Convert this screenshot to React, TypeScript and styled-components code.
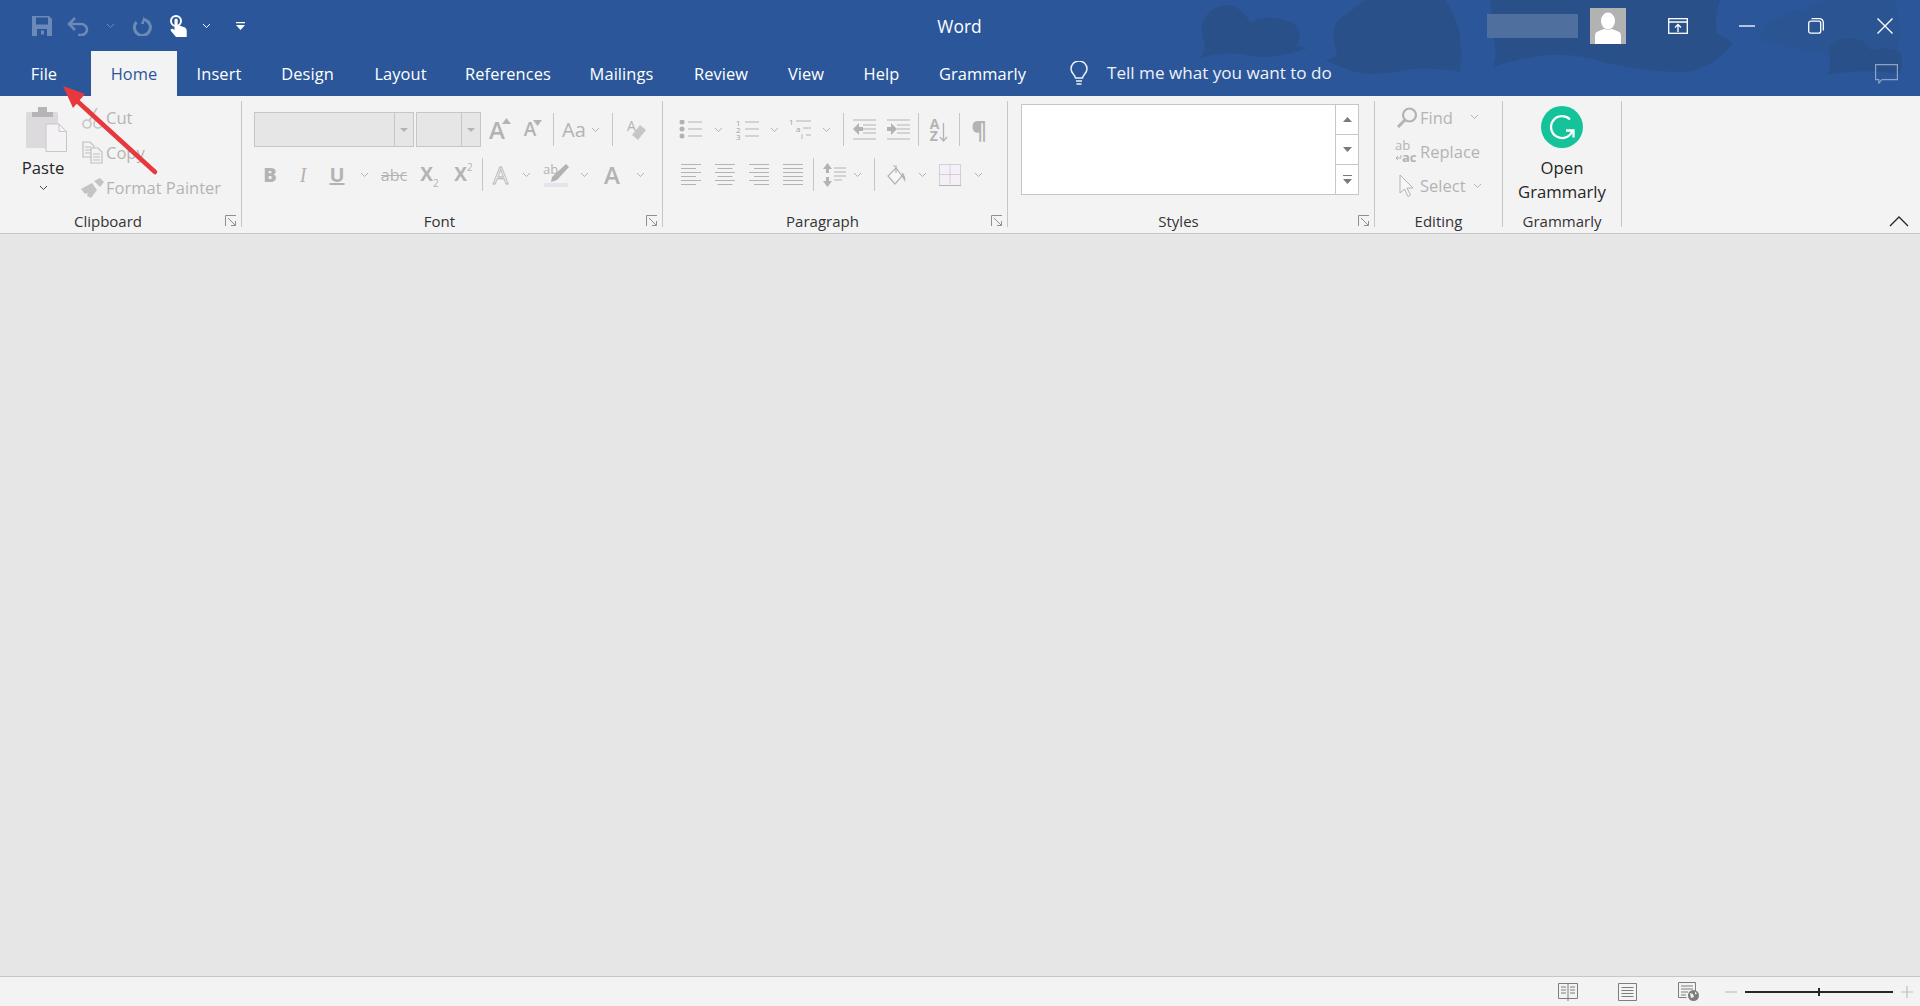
import React from 'react';
import styled, { createGlobalStyle } from 'styled-components';

const BLUE = '#2b579a';
const OFF = '#b3b3b3';
const LINE = '#c6c6c6';
const FONT = '"Open Sans", "Noto Sans", "Liberation Sans", sans-serif';

const GlobalStyle = createGlobalStyle`
  html, body { margin: 0; height: 100%; }
  body { font-family: ${FONT}; background: #e6e6e6; overflow: hidden; }
  #root { height: 100%; }
`;

const Shell = styled.div`
  position: relative;
  display: flex;
  flex-direction: column;
  height: 1006px;
  overflow: hidden;
`;

const Header = styled.header`
  position: relative;
  height: 96px;
  flex: none;
  background: ${BLUE};
  color: #fff;
`;

const HeaderArt = styled.svg`
  position: absolute;
  inset: 0;
  width: 100%;
  height: 96px;
`;

const TitleBar = styled.div`
  position: relative;
  display: grid;
  grid-template-columns: 1fr auto 1fr;
  align-items: center;
  height: 51px;
`;

const QuickAccess = styled.div`
  display: flex;
  align-items: center;
  padding-left: 26px;
`;

const Slot = styled.span<{ $w: number; $faded?: boolean }>`
  display: inline-flex;
  align-items: center;
  justify-content: center;
  flex: none;
  width: ${p => p.$w}px;
  opacity: ${p => (p.$faded ? 0.3 : 1)};
`;

const Title = styled.div`
  font-size: 17.4px;
  text-align: center;
  padding-right: 1px;
`;

const WindowArea = styled.div`
  display: flex;
  align-items: center;
  justify-content: flex-end;
  padding-right: 1px;
`;

const NamePlate = styled.div`
  width: 91px;
  height: 24px;
  margin-right: 12px;
  background: #4f6f9e;
`;

const Avatar = styled.div`
  width: 36px;
  height: 36px;
  margin-right: 17px;
  background: #b2b2b2;
`;

const WindowButton = styled.span`
  display: inline-flex;
  justify-content: center;
  align-items: center;
  width: 69px;
  height: 36px;
`;

const TabBar = styled.nav`
  position: relative;
  display: flex;
  align-items: stretch;
  height: 45px;
  padding-left: 12px;
`;

const Tab = styled.div<{ $w: number; $active?: boolean; $gapAfter?: number }>`
  display: flex;
  align-items: center;
  justify-content: center;
  flex: none;
  width: ${p => p.$w}px;
  margin-right: ${p => p.$gapAfter ?? 0}px;
  font-size: 16.4px;
  letter-spacing: 0.1px;
  background: ${p => (p.$active ? '#f3f3f3' : 'transparent')};
  color: ${p => (p.$active ? BLUE : '#fff')};
`;

const TellMe = styled.div`
  display: flex;
  align-items: center;
  gap: 19px;
  margin-left: 24px;
  padding-bottom: 2px;
  font-size: 17.1px;
  color: #eef1f7;
`;

const CommentSlot = styled.div`
  position: absolute;
  right: 22px;
  top: 13px;
`;

const Ribbon = styled.section`
  display: flex;
  flex: none;
  height: 138px;
  padding: 5px 0 6px;
  box-sizing: border-box;
  background: #f3f3f3;
  border-bottom: 1px solid ${LINE};
  position: relative;
`;

const Group = styled.div<{ $w: number; $top?: number; $left?: number }>`
  position: relative;
  display: flex;
  flex-direction: column;
  flex: none;
  box-sizing: border-box;
  width: ${p => p.$w}px;
  padding-top: ${p => p.$top ?? 0}px;
  padding-left: ${p => p.$left ?? 0}px;
  border-right: 1px solid ${LINE};
`;

const GroupBody = styled.div`
  flex: 1;
  min-height: 0;
`;

const SplitBody = styled(GroupBody)`
  display: flex;
`;

const GroupLabel = styled.div<{ $pull?: number; $launcher?: boolean }>`
  height: 20px;
  margin: 0 0 -4px ${p => -(p.$pull ?? 0)}px;
  padding-right: ${p => (p.$launcher ? 25 : 0)}px;
  font-size: 15px;
  line-height: 20px;
  text-align: center;
  color: #333;
`;

const Launcher = styled.span`
  position: absolute;
  right: 4px;
  bottom: 0;
  display: flex;
`;

const ToolRow = styled.div<{ $mb?: number }>`
  display: flex;
  align-items: center;
  height: 35px;
  margin-bottom: ${p => p.$mb ?? 0}px;
`;

const Sep = styled.span<{ $l?: number; $r?: number }>`
  flex: none;
  width: 1px;
  height: 33px;
  margin: 0 ${p => p.$r ?? 0}px 0 ${p => p.$l ?? 0}px;
  background: ${LINE};
`;

const ComboBox = styled.div<{ $w: number; $mr?: number }>`
  display: flex;
  flex: none;
  box-sizing: border-box;
  width: ${p => p.$w}px;
  height: 35px;
  margin-right: ${p => p.$mr ?? 0}px;
  background: #e6e6e6;
  border: 1px solid ${LINE};
`;

const ComboField = styled.div`
  flex: 1;
`;

const ComboDrop = styled.div`
  display: flex;
  align-items: center;
  justify-content: center;
  width: 18px;
  border-left: 1px solid ${LINE};
`;

const DownTriangle = styled.span`
  width: 0;
  height: 0;
  border-left: 4px solid transparent;
  border-right: 4px solid transparent;
  border-top: 4px solid ${OFF};
`;

const Glyph = styled.span<{ $size?: number; $weight?: number; $italic?: boolean; $under?: boolean; $strike?: boolean; $font?: string }>`
  position: relative;
  display: inline-block;
  font-family: ${p => p.$font ?? FONT};
  font-size: ${p => p.$size ?? 18}px;
  font-weight: ${p => p.$weight ?? 400};
  font-style: ${p => (p.$italic ? 'italic' : 'normal')};
  text-decoration: ${p => (p.$under ? 'underline' : p.$strike ? 'line-through' : 'none')};
  line-height: 1;
  color: ${OFF};
`;

const OutlineGlyph = styled(Glyph)`
  color: #fafafa;
  -webkit-text-stroke: 0.8px ${OFF};
`;

const SubMark = styled.sub`
  font-size: 10px;
  font-weight: 400;
  vertical-align: -6px;
  line-height: 0;
`;

const SupMark = styled.sup`
  font-size: 10px;
  font-weight: 400;
  vertical-align: 10px;
  line-height: 0;
`;

const StackedLetters = styled.span`
  display: inline-flex;
  flex-direction: column;
  font-size: 14px;
  font-weight: 700;
  line-height: 12px;
  color: ${OFF};
`;

const SizeTick = styled.svg<{ $size: number }>`
  position: absolute;
  top: 0;
  right: -6px;
  width: ${p => p.$size}px;
  height: 6px;
`;

const PasteColumn = styled.div`
  display: flex;
  flex-direction: column;
  align-items: center;
  box-sizing: border-box;
  width: 79px;
  padding: 6px 0 0 7px;
  font-size: 16.7px;
  color: #262626;
`;

const PasteArt = styled.span`
  display: flex;
  margin-left: 7px;
`;

const PasteText = styled.span`
  margin-top: 4px;
  line-height: 24px;
`;

const PasteChevron = styled.span`
  display: flex;
  margin-top: 5px;
`;

const CommandList = styled.div<{ $offset?: number }>`
  display: flex;
  flex-direction: column;
  margin-top: ${p => p.$offset ?? 0}px;
`;

const Command = styled.div<{ $h?: number }>`
  display: flex;
  align-items: center;
  height: ${p => p.$h ?? 35}px;
  font-size: 16.5px;
  color: ${OFF};
`;

const CommandIcon = styled.span`
  display: inline-flex;
  justify-content: center;
  width: 27px;
  flex: none;
`;

const CommandChevron = styled.span<{ $l: number }>`
  display: inline-flex;
  margin-left: ${p => p.$l}px;
`;

const Gallery = styled.div`
  display: flex;
  box-sizing: border-box;
  width: 338px;
  height: 91px;
  margin-left: 13px;
  background: #fff;
  border: 1px solid ${LINE};
`;

const GalleryField = styled.div`
  flex: 1;
`;

const GalleryScroll = styled.div`
  display: flex;
  flex-direction: column;
  width: 22px;
  border-left: 1px solid ${LINE};
`;

const GalleryStep = styled.div`
  flex: 1;
  display: flex;
  align-items: center;
  justify-content: center;
  & + & { border-top: 1px solid ${LINE}; }
`;

const GrammarlyBody = styled(GroupBody)`
  display: flex;
  flex-direction: column;
  align-items: center;
`;

const OpenLabel = styled.div`
  margin-top: 8px;
  font-size: 16.7px;
  line-height: 24px;
  text-align: center;
  color: #262626;
`;

const Collapse = styled.span`
  position: absolute;
  right: 11px;
  bottom: 6px;
  display: flex;
`;

const DocumentArea = styled.main`
  flex: 1;
  background: #e6e6e6;
`;

const StatusBar = styled.footer`
  display: flex;
  align-items: center;
  justify-content: flex-end;
  box-sizing: border-box;
  height: 30px;
  flex: none;
  padding: 0 7px 0 0;
  background: #f3f3f3;
  border-top: 1px solid ${LINE};
`;

const ViewButton = styled.span`
  display: inline-flex;
  justify-content: center;
  width: 60px;
`;

const ZoomTrack = styled.div`
  position: relative;
  width: 148px;
  height: 2px;
  margin: 0 8px 0 1px;
  background: #262626;
`;

const ZoomThumb = styled.span`
  position: absolute;
  left: 73px;
  top: -3px;
  width: 2px;
  height: 8px;
  background: #262626;
`;

const ArrowOverlay = styled.svg`
  position: absolute;
  left: 0;
  top: 0;
  width: 200px;
  height: 200px;
  pointer-events: none;
`;

const Chevron = ({ color = OFF, w = 9 }: { color?: string; w?: number }) => (
  <svg width={w} height="6" viewBox="0 0 9 6" fill="none"><path d="M1 1l3.5 3.5L8 1" stroke={color} strokeWidth="1" /></svg>
);

const SaveIcon = () => (
  <svg width="20" height="20" viewBox="0 0 20 20"><path fill="#fff" fillRule="evenodd" d="M0 0h17l3 3v17H0zM4 1.500v7h12v-7zM5 13v7h10v-7zM9 14.500h3v4H9z" /></svg>
);
const UndoIcon = () => (
  <svg width="22" height="20" viewBox="0 0 22 20" fill="none" stroke="#fff" strokeWidth="2.600"><path d="M8 2L2 8l6 6" /><path d="M2 8h12c4 0 6 3 6 5.500S18 19 14 19h-3" /></svg>
);
const RedoIcon = () => (
  <svg width="20" height="20" viewBox="0 0 20 20" fill="none" stroke="#fff" strokeWidth="3"><path d="M11.500 3.500a8 8 0 1 1-7 2.500" /><path d="M12 0v8H9z" fill="#fff" stroke="none" /></svg>
);
const TouchIcon = () => (
  <svg width="17" height="22" viewBox="0 0 17 22"><circle cx="6" cy="6" r="5" fill="none" stroke="#fff" strokeWidth="2" /><path fill="#fff" d="M4.500 5a1.600 1.600 0 0 1 3.200 0v5l6 2c2 .6 3 2 3 4v6H6l-5-6c-1-1.300.5-3 2-2l1.500 1z" /></svg>
);
const CustomizeIcon = () => (
  <svg width="9" height="8" viewBox="0 0 9 8"><path fill="#fff" d="M0 0h9v1.300H0zM0 3h9L4.500 8z" /></svg>
);

const PresentIcon = () => (
  <svg width="20" height="16" viewBox="0 0 20 16" fill="none" stroke="#fff" strokeWidth="1.300"><rect x=".7" y=".7" width="18.600" height="14.600" /><path d="M.7 4h18.600M10 14V7M7 9.500L10 6.500l3 3" /></svg>
);
const MinimizeIcon = () => (
  <svg width="16" height="2" viewBox="0 0 16 2"><path d="M0 1h16" stroke="#fff" strokeWidth="1.300" /></svg>
);
const RestoreIcon = () => (
  <svg width="16" height="16" viewBox="0 0 16 16" fill="none" stroke="#fff" strokeWidth="1.300"><rect x=".7" y="3.200" width="12" height="12" rx="2" /><path d="M3.500 .7h8a3.800 3.800 0 0 1 3.800 3.800v8" /></svg>
);
const CloseIcon = () => (
  <svg width="16" height="16" viewBox="0 0 16 16"><path d="M.5.500l15 15M15.500.500l-15 15" stroke="#fff" strokeWidth="1.400" /></svg>
);
const AvatarIcon = () => (
  <svg width="36" height="36" viewBox="0 0 36 36"><ellipse cx="18" cy="13" rx="7" ry="8.500" fill="#fff" /><path fill="#fff" d="M5 36v-8c0-3 1-4 4-5l5-2 4 1 4-1 5 2c3 1 4 2 4 5v8z" /></svg>
);
const CommentIcon = () => (
  <svg width="23" height="20" viewBox="0 0 23 20" fill="none" stroke="#8ba3c6" strokeWidth="1.200"><path d="M.6.600h21.800v15H7L3.800 19v-3.400H.6z" /></svg>
);
const BulbIcon = () => (
  <svg width="18" height="24" viewBox="0 0 18 24" fill="none" stroke="#eef1f7" strokeWidth="1.500"><path d="M5.500 17c0-3-4.500-4.500-4.500-9a8 8 0 0 1 16 0c0 4.500-4.500 6-4.500 9z" /><path d="M6 20h6M6.500 23h5" /></svg>
);

const PasteIcon = () => (
  <svg width="41" height="45" viewBox="0 0 41 45">
    <rect y="5" width="32" height="36" rx="2" fill="#dcdadc" />
    <path fill="#b6b4b6" d="M6 5h6V0h9v5h6v5H6z" />
    <path fill="#f5f2f6" stroke="#c8c6c8" d="M20 17h13l7.500 7.500V44.500H20z" />
    <path fill="none" stroke="#c8c6c8" d="M33 17v7.500h7.500" />
  </svg>
);
const CutIcon = () => (
  <svg width="21" height="22" viewBox="0 0 21 22" fill="none" stroke="#c4c4c4" strokeWidth="1.600"><circle cx="5" cy="17" r="4" /><circle cx="16" cy="17" r="4" /><path d="M7 14L15 1M14 14L6 1" /></svg>
);
const CopyIcon = () => (
  <svg width="21" height="23" viewBox="0 0 21 23" fill="#f3f3f3" stroke="#c0c0c0" strokeWidth="1.200"><path d="M1 1h7l4 4v11H1zM3 6h6M3 9h6M3 12h6" /><path d="M9 7h7l4 4v11H9zM11 13h7M11 16h7M11 19h7" /></svg>
);
const PainterIcon = () => (
  <svg width="24" height="20" viewBox="0 0 24 20"><path fill="#c4c4c4" d="M0 11l11-6 5 7-6 8-4-2 1-3-3 1zM13 3l6-3 4 4-4 5z" /></svg>
);
const Launch = () => (
  <svg width="12" height="12" viewBox="0 0 12 12" fill="none" stroke="#8f8f8f" strokeWidth="1"><path d="M.5 11V.5H11M3 3l7.500 7.500M10.500 6v4.500H6" /></svg>
);

const ClearIcon = () => (
  <svg width="20" height="22" viewBox="0 0 20 22" overflow="visible"><text x="0" y="12" fontSize="14" fill={OFF} fontFamily={FONT}>A</text><path fill="#c6c6c6" d="M13 6l6 5-8 10-6-5z" /></svg>
);
const HighlightIcon = () => (
  <svg width="26" height="26" viewBox="0 0 26 26" overflow="visible"><text x="0" y="12" fontSize="13" fill={OFF} fontFamily={FONT}>ab</text><path fill={OFF} d="M23 2l3 3L14 18l-6 2 1-5z" /><path fill="#e8e2ea" d="M1 21h24v4H1z" /></svg>
);

const ListLines = ({ x = 8 }: { x?: number }) => (
  <path d={`M${x} 2h14M${x} 9h14M${x} 16h14`} stroke={OFF} strokeWidth="1" />
);
const BulletsIcon = () => (
  <svg width="24" height="19" viewBox="0 0 24 19" fill={OFF}><circle cx="3" cy="2" r="2.500" /><circle cx="3" cy="9" r="2.500" /><circle cx="3" cy="16" r="2.500" /><ListLines x={9} /></svg>
);
const NumberingIcon = () => (
  <svg width="24" height="20" viewBox="0 0 24 20" fill="#a0a0a0" fontSize="8" fontFamily={FONT} overflow="visible"><text x="0" y="6">1</text><text x="0" y="13">2</text><text x="0" y="20">3</text><ListLines x={9} /></svg>
);
const MultilevelIcon = () => (
  <svg width="24" height="21" viewBox="0 0 24 21" fill="#a0a0a0" fontSize="8" fontFamily={FONT} overflow="visible"><text x="0" y="6">1</text><text x="7" y="13">a</text><text x="12" y="20">i</text><path d="M7 2h15M14 9h8M17 16h5" stroke={OFF} strokeWidth="1" /></svg>
);
const IndentIcon = ({ increase }: { increase?: boolean }) => (
  <svg width="23" height="21" viewBox="0 0 23 21" fill="none" stroke={OFF} strokeWidth="1"><path d="M0 1h23M10 6h13M10 10h13M10 14h13M0 20h23" /><path fill={OFF} stroke="none" d={increase ? 'M0 8h4V4l6 6-6 6v-4H0z' : 'M10 8H6V4l-6 6 6 6v-4h4z'} /></svg>
);
const DownArrow = () => (
  <svg width="9" height="26" viewBox="0 0 9 26" fill="none" stroke={OFF} strokeWidth="1.300"><path d="M4.500 6v18M1 20l3.500 4L8 20" /></svg>
);
const AlignIcon = ({ mode }: { mode: 'left' | 'center' | 'right' | 'justify' }) => {
  const rows = [0, 1, 2, 3, 4, 5].map(i => {
    const short = i % 2 === 1 && mode !== 'justify';
    const w = short ? 15 : 20;
    const x = mode === 'center' ? (20 - w) / 2 : mode === 'right' ? 20 - w : 0;
    return <path key={i} d={`M${x} ${i * 4 + 0.5}h${w}`} />;
  });
  return <svg width="20" height="22" viewBox="0 0 20 22" fill="none" stroke={OFF} strokeWidth="1">{rows}</svg>;
};
const LineSpacingIcon = () => (
  <svg width="23" height="24" viewBox="0 0 23 24" fill="none" stroke={OFF} strokeWidth="1"><path fill={OFF} stroke="none" d="M4.500 0L9 6H6v4H3V6H0zM3 14h3v4h3l-4.500 6L0 18h3z" /><path d="M11 5h12M11 9h12M11 13h12M11 17h8" /></svg>
);
const ShadingIcon = () => (
  <svg width="19" height="20" viewBox="0 0 19 20" fill="none" stroke={OFF} strokeWidth="1.200"><path d="M9 3L1 11l7 8 7-8z" fill="#f7f7f7" /><path d="M6 1h3v7" /><path d="M15 7c3 3 4 7 3 10-1-2-2-4-3-5z" fill={OFF} stroke="none" /></svg>
);
const BordersIcon = () => (
  <svg width="22" height="22" viewBox="0 0 22 22" fill="none" stroke={OFF} strokeWidth="1"><path fill="#f5eff7" stroke="none" d="M0 0h22v22H0z" /><path strokeDasharray="1 1" d="M.5.500h21v21H.500zM11 .5v20M.5 10.500h21" /><path d="M0 21.500h22" /></svg>
);

const FindIcon = () => (
  <svg width="22" height="21" viewBox="0 0 22 21" fill="none" stroke={OFF} strokeWidth="2.200"><circle cx="13.500" cy="8" r="6.500" /><path strokeWidth="3" d="M9 13l-7 7" /></svg>
);
const ReplaceIcon = () => (
  <svg width="24" height="24" viewBox="0 0 24 24" fill={OFF} fontFamily={FONT} fontSize="13" overflow="visible"><text x="0" y="10">ab</text><text x="7" y="22" fontWeight="700">ac</text><path d="M6 15v3H1M3 16l-2 2 2 2" fill="none" stroke={OFF} strokeWidth="1" /></svg>
);
const SelectIcon = () => (
  <svg width="15" height="23" viewBox="0 0 15 23" fill="#f7f7f7" stroke={OFF} strokeWidth="1"><path d="M1 1l13 13H8l3.500 7-2.500 1.500L5.500 15 1 19z" /></svg>
);
const GrammarlyIcon = () => (
  <svg width="42" height="42" viewBox="0 0 42 42" fill="none" stroke="#fff" strokeWidth="2.300">
    <circle cx="21" cy="21" r="21" fill="#15c39a" stroke="none" />
    <path d="M29 13.500a11 11 0 1 0 2.500 11" />
    <path d="M25 24.500h7.500v7" />
  </svg>
);

const StepUp = () => <svg width="9" height="5" viewBox="0 0 9 5"><path d="M4.500 0L9 5H0z" fill="#7a7a7a" /></svg>;
const StepDown = () => <svg width="9" height="5" viewBox="0 0 9 5"><path d="M0 0h9L4.500 5z" fill="#7a7a7a" /></svg>;
const StepMore = () => <svg width="9" height="9" viewBox="0 0 9 9"><path d="M0 0h9v1H0zM0 4h9L4.500 9z" fill="#7a7a7a" /></svg>;
const CollapseIcon = () => <svg width="20" height="11" viewBox="0 0 20 11" fill="none" stroke="#262626" strokeWidth="1.300"><path d="M1 10l9-9 9 9" /></svg>;

const ReadIcon = () => (
  <svg width="20" height="18" viewBox="0 0 20 18" fill="none" stroke="#7d7d7d" strokeWidth="1"><path d="M.5.500h19v15H.500zM10 0v18M3 4h5M3 7h5M3 10h5M12 4h5M12 7h5M12 10h5" /></svg>
);
const PrintIcon = () => (
  <svg width="20" height="18" viewBox="0 0 20 18" fill="none" stroke="#7d7d7d" strokeWidth="1"><path d="M.5.500h18v17H.500zM3.500 4.500h12M3.500 7.500h12M3.500 10.500h12M3.500 13.500h12" /></svg>
);
const WebIcon = () => (
  <svg width="21" height="19" viewBox="0 0 21 19" fill="none" stroke="#7d7d7d" strokeWidth="1"><path d="M.5.500h17v9M.5.500v15h8M3 4h12M3 7h12M3 10h7M3 13h5" /><circle cx="15.500" cy="13.500" r="5.500" fill="#7d7d7d" stroke="none" /><path d="M12 11l3 1 1 3-3 1zM17 9.500l2 2-2 1z" fill="#f3f3f3" stroke="none" /></svg>
);
const ZoomMinus = () => <svg width="12" height="2" viewBox="0 0 12 2"><path d="M0 1h12" stroke="#c0c0c0" strokeWidth="1.200" /></svg>;
const ZoomPlus = () => <svg width="12" height="12" viewBox="0 0 12 12"><path d="M0 6h12M6 0v12" stroke="#c0c0c0" strokeWidth="1.200" /></svg>;

const tabs = [
  { label: 'Insert', w: 84 },
  { label: 'Design', w: 93 },
  { label: 'Layout', w: 93 },
  { label: 'References', w: 122 },
  { label: 'Mailings', w: 105 },
  { label: 'Review', w: 94 },
  { label: 'View', w: 76 },
  { label: 'Help', w: 75 },
  { label: 'Grammarly', w: 127 },
];

export default function App() {
  return (
    <Shell>
      <GlobalStyle />
      <Header>
        <HeaderArt viewBox="0 0 1920 96" aria-hidden="true">
          <path fill="#2a5492" d="M1760 40q5-25 22-22 8-12 22-6 8-12 30-12h60q10 30 0 60-20 6-50-2-50-10-84-18z" />
          <path fill="#2a508a" d="M1200 58q7-8 4-16-8-22 11-34 20-10 35 14 25-10 46 3 8 13-1 21l13 2q-38 14-68 6-20-2-40 4z" />
          <path fill="#2a508a" d="M1365 0h80q20 25 15 72-40-7-65 0-35 6-55-6-10-4-15-6 15-2 11-10-8-25 9-35 10-7 20-15z" />
          <path fill="#2a508a" d="M1490 0h230q-6 18-3 33l16 10q-20 25-46 29-45 0-80-9-30-10-60-8-26 3-54 12 4-10 2-20-3-25-5-47z" />
          <path fill="#2a508a" d="M1827 75q4-6 3-16-5-20 20-21 14 0 20 12 20-4 30 2 4 8 0 22-35-6-73 1z" />
        </HeaderArt>
        <TitleBar>
          <QuickAccess>
            <Slot $w={31} $faded><SaveIcon /></Slot>
            <Slot $w={42} $faded><UndoIcon /></Slot>
            <Slot $w={22} $faded><Chevron color="#fff" /></Slot>
            <Slot $w={42} $faded><RedoIcon /></Slot>
            <Slot $w={30}><TouchIcon /></Slot>
            <Slot $w={26}><Chevron color="#fff" /></Slot>
            <Slot $w={42}><CustomizeIcon /></Slot>
          </QuickAccess>
          <Title>Word</Title>
          <WindowArea>
            <NamePlate />
            <Avatar><AvatarIcon /></Avatar>
            <WindowButton><PresentIcon /></WindowButton>
            <WindowButton><MinimizeIcon /></WindowButton>
            <WindowButton><RestoreIcon /></WindowButton>
            <WindowButton><CloseIcon /></WindowButton>
          </WindowArea>
        </TitleBar>
        <TabBar>
          <Tab $w={64} $gapAfter={15}>File</Tab>
          <Tab $w={86} $active>Home</Tab>
          {tabs.map(t => <Tab key={t.label} $w={t.w}>{t.label}</Tab>)}
          <TellMe><BulbIcon />Tell me what you want to do</TellMe>
          <CommentSlot><CommentIcon /></CommentSlot>
        </TabBar>
      </Header>

      <Ribbon>
        <Group $w={242}>
          <SplitBody>
            <PasteColumn>
              <PasteArt><PasteIcon /></PasteArt>
              <PasteText>Paste</PasteText>
              <PasteChevron><Chevron color="#444" /></PasteChevron>
            </PasteColumn>
            <CommandList $offset={-1}>
              <Command><CommandIcon><CutIcon /></CommandIcon>Cut</Command>
              <Command><CommandIcon><CopyIcon /></CommandIcon>Copy</Command>
              <Command><CommandIcon><PainterIcon /></CommandIcon>Format Painter</Command>
            </CommandList>
          </SplitBody>
          <GroupLabel $launcher>Clipboard</GroupLabel>
          <Launcher><Launch /></Launcher>
        </Group>

        <Group $w={421} $top={11} $left={12}>
          <GroupBody>
            <ToolRow $mb={10}>
              <ComboBox $w={160} $mr={2}><ComboField /><ComboDrop><DownTriangle /></ComboDrop></ComboBox>
              <ComboBox $w={65}><ComboField /><ComboDrop><DownTriangle /></ComboDrop></ComboBox>
              <Slot $w={32}><Glyph $size={24} $weight={600}>A<SizeTick $size={9} viewBox="0 0 9 6"><path d="M4.500 0L9 6H0z" fill={OFF} /></SizeTick></Glyph></Slot>
              <Slot $w={34}><Glyph $size={19} $weight={600}>A<SizeTick $size={9} viewBox="0 0 9 6"><path d="M0 0h9L4.500 6z" fill={OFF} /></SizeTick></Glyph></Slot>
              <Sep $l={6} $r={6} />
              <Slot $w={28}><Glyph $size={20}>Aa</Glyph></Slot>
              <Slot $w={14}><Chevron /></Slot>
              <Sep $l={10} $r={7} />
              <Slot $w={34}><ClearIcon /></Slot>
            </ToolRow>
            <ToolRow>
              <Slot $w={32}><Glyph $size={20} $weight={800}>B</Glyph></Slot>
              <Slot $w={34}><Glyph $size={20} $italic $font='"Liberation Serif", serif'>I</Glyph></Slot>
              <Slot $w={34}><Glyph $size={20} $weight={700} $under>U</Glyph></Slot>
              <Slot $w={20}><Chevron /></Slot>
              <Slot $w={40}><Glyph $size={16} $strike>abc</Glyph></Slot>
              <Slot $w={31}><Glyph $size={19} $weight={700}>X<SubMark>2</SubMark></Glyph></Slot>
              <Slot $w={37}><Glyph $size={19} $weight={700}>X<SupMark>2</SupMark></Glyph></Slot>
              <Sep />
              <Slot $w={35}><OutlineGlyph $size={24}>A</OutlineGlyph></Slot>
              <Slot $w={16}><Chevron /></Slot>
              <Slot $w={44}><HighlightIcon /></Slot>
              <Slot $w={12}><Chevron /></Slot>
              <Slot $w={44}><Glyph $size={24} $weight={600}>A</Glyph></Slot>
              <Slot $w={12}><Chevron /></Slot>
            </ToolRow>
          </GroupBody>
          <GroupLabel $pull={12} $launcher>Font</GroupLabel>
          <Launcher><Launch /></Launcher>
        </Group>

        <Group $w={345} $top={11} $left={12}>
          <GroupBody>
            <ToolRow $mb={10}>
              <Slot $w={32}><BulletsIcon /></Slot>
              <Slot $w={22}><Chevron /></Slot>
              <Slot $w={37}><NumberingIcon /></Slot>
              <Slot $w={16}><Chevron /></Slot>
              <Slot $w={38}><MultilevelIcon /></Slot>
              <Slot $w={12}><Chevron /></Slot>
              <Sep $l={11} />
              <Slot $w={40}><IndentIcon /></Slot>
              <Slot $w={28}><IndentIcon increase /></Slot>
              <Sep $l={6} />
              <Slot $w={40}><StackedLetters>A<br />Z</StackedLetters><DownArrow /></Slot>
              <Sep />
              <Slot $w={38}><Glyph $size={24} $weight={700}>¶</Glyph></Slot>
            </ToolRow>
            <ToolRow>
              <Slot $w={32}><AlignIcon mode="left" /></Slot>
              <Slot $w={36}><AlignIcon mode="center" /></Slot>
              <Slot $w={32}><AlignIcon mode="right" /></Slot>
              <Slot $w={36}><AlignIcon mode="justify" /></Slot>
              <Sep $l={2} $r={2} />
              <Slot $w={36}><LineSpacingIcon /></Slot>
              <Slot $w={10}><Chevron /></Slot>
              <Sep $l={12} />
              <Slot $w={42}><ShadingIcon /></Slot>
              <Slot $w={10}><Chevron /></Slot>
              <Slot $w={46}><BordersIcon /></Slot>
              <Slot $w={10}><Chevron /></Slot>
            </ToolRow>
          </GroupBody>
          <GroupLabel $pull={12} $launcher>Paragraph</GroupLabel>
          <Launcher><Launch /></Launcher>
        </Group>

        <Group $w={367} $top={3}>
          <GroupBody>
            <Gallery>
              <GalleryField />
              <GalleryScroll>
                <GalleryStep><StepUp /></GalleryStep>
                <GalleryStep><StepDown /></GalleryStep>
                <GalleryStep><StepMore /></GalleryStep>
              </GalleryScroll>
            </Gallery>
          </GroupBody>
          <GroupLabel $launcher>Styles</GroupLabel>
          <Launcher><Launch /></Launcher>
        </Group>

        <Group $w={128} $left={18}>
          <SplitBody>
            <CommandList $offset={-1.5}>
              <Command $h={35}><CommandIcon><FindIcon /></CommandIcon>Find<CommandChevron $l={17}><Chevron /></CommandChevron></Command>
              <Command $h={34}><CommandIcon><ReplaceIcon /></CommandIcon>Replace</Command>
              <Command $h={34}><CommandIcon><SelectIcon /></CommandIcon>Select<CommandChevron $l={7}><Chevron /></CommandChevron></Command>
            </CommandList>
          </SplitBody>
          <GroupLabel $pull={18}>Editing</GroupLabel>
        </Group>

        <Group $w={119} $top={5}>
          <GrammarlyBody>
            <GrammarlyIcon />
            <OpenLabel>Open<br />Grammarly</OpenLabel>
          </GrammarlyBody>
          <GroupLabel>Grammarly</GroupLabel>
        </Group>

        <Collapse><CollapseIcon /></Collapse>
      </Ribbon>

      <DocumentArea />

      <StatusBar>
        <ViewButton><ReadIcon /></ViewButton>
        <ViewButton><PrintIcon /></ViewButton>
        <ViewButton><WebIcon /></ViewButton>
        <Slot $w={26}><ZoomMinus /></Slot>
        <ZoomTrack><ZoomThumb /></ZoomTrack>
        <Slot $w={12}><ZoomPlus /></Slot>
      </StatusBar>

      <ArrowOverlay viewBox="0 0 200 200" aria-hidden="true">
        <path d="M155 172L76 100" stroke="#e8383d" strokeWidth="4.500" strokeLinecap="round" />
        <path d="M63 86l22 8-12 14z" fill="#e8383d" />
      </ArrowOverlay>
    </Shell>
  );
}
